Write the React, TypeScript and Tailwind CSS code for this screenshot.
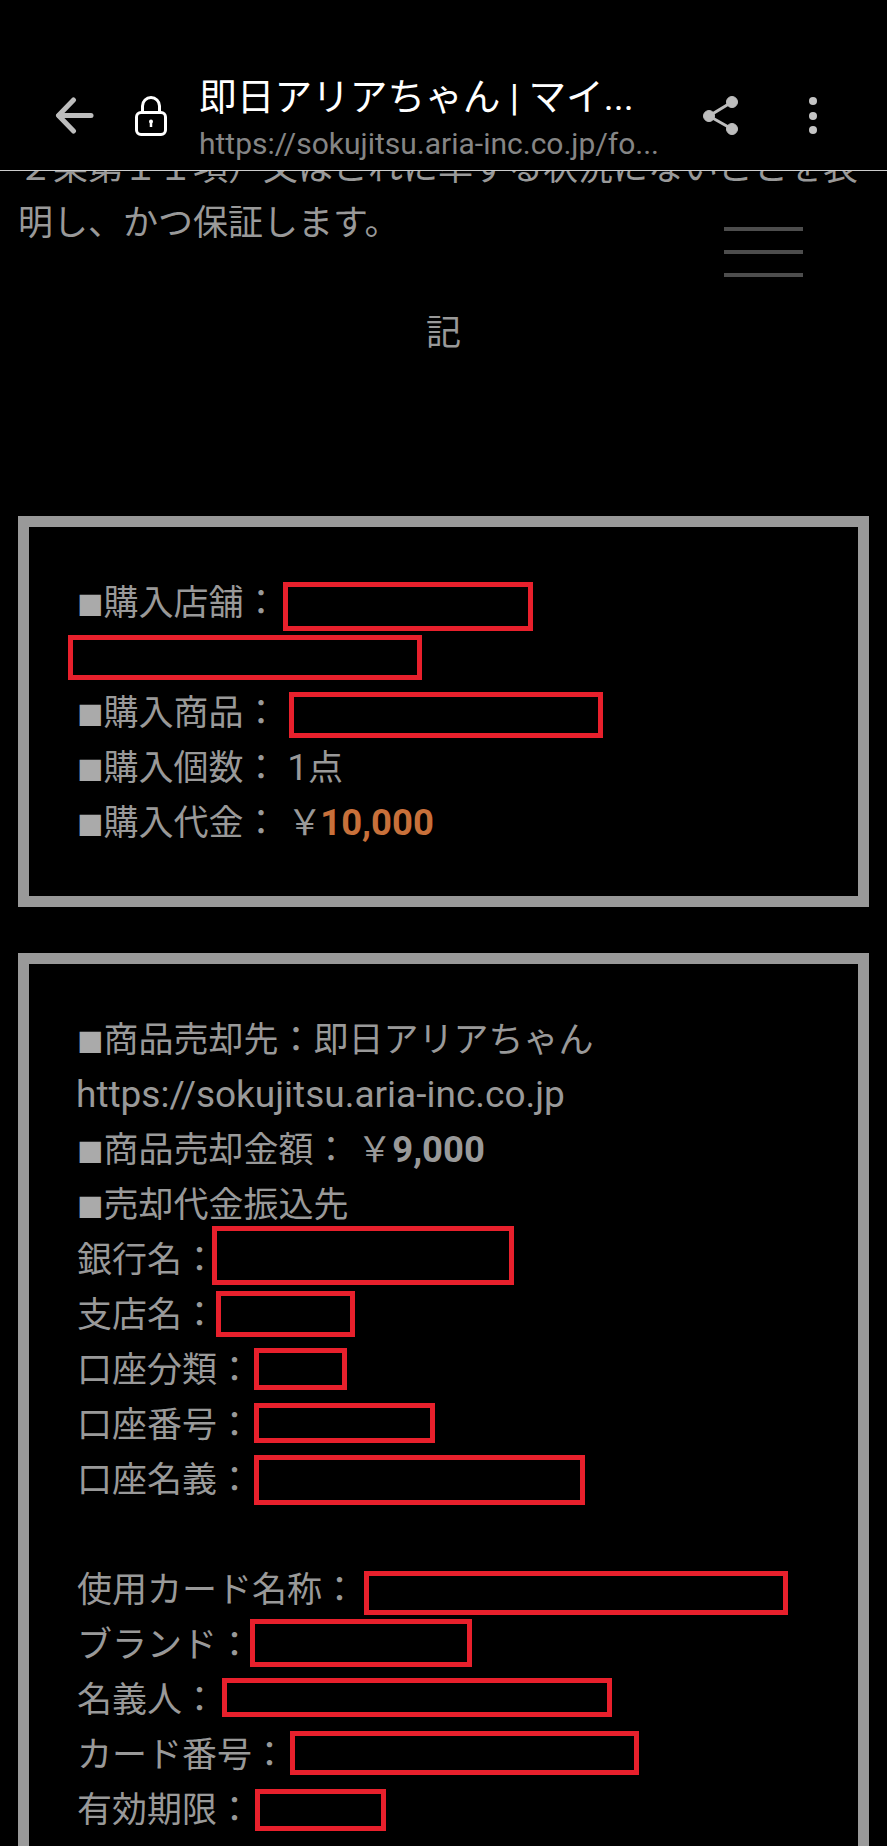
import type { ReactNode } from "react";

const rowFont = "[font-family:Roboto,'Noto_Sans_CJK_JP',sans-serif]";

function Row({ children, redact }: { children?: ReactNode; redact?: ReactNode }) {
  return (
    <div className="relative h-[55px] leading-[59px] whitespace-nowrap">
      {children}
      {redact}
    </div>
  );
}

function Sq() {
  return <span className="text-[26.5px] text-[#aaaaaa]">■</span>;
}

function Panel({ children, className }: { children: ReactNode; className: string }) {
  return (
    <section className={`border-[11px] border-[#999999] pl-[48px] ${className}`}>
      {children}
    </section>
  );
}

const redactBox = "absolute border-[5px] border-[#e8202c]";

export default function App() {
  return (
    <div className={`relative h-[1846px] overflow-hidden bg-black text-[35px] text-[#999999] ${rowFont}`}>
      <header className="absolute inset-x-0 top-0 z-10 flex h-[171px] items-start border-b border-[#cccccc] bg-black">
        <svg viewBox="0 0 39 37" className="ml-[55px] mt-[97px] h-[37px] w-[39px]" fill="none" stroke="#bdbdbd" strokeWidth="5" strokeLinecap="round" strokeLinejoin="round">
          <path d="M36 18.5H4" />
          <path d="M18.5 3 3.5 18.5 18.5 34" />
        </svg>
        <svg viewBox="0 0 32 40" className="ml-[41px] mt-[96px] h-[40px] w-[32px]" fill="none" stroke="#ffffff" strokeWidth="3">
          <rect x="1.5" y="16.5" width="29" height="22" rx="4.5" />
          <path d="M7.5 16.5V10a8.5 8.5 0 0 1 17 0v6.5" />
          <circle cx="16" cy="25.5" r="2" fill="#ffffff" stroke="none" />
          <path d="M16 26v5" strokeWidth="2.5" />
        </svg>
        <div className="ml-[32px] mt-[74px] w-[470px]">
          <div className="h-[46px] text-[37.7px] leading-[46px] text-white whitespace-nowrap">即日アリアちゃん | マイ...</div>
          <div className="mt-[5px] text-[30px] leading-[38px] text-[#858585] whitespace-nowrap">https://sokujitsu.aria-inc.co.jp/fo...</div>
        </div>
        <svg viewBox="0 0 36 39" className="ml-[34px] mt-[96px] h-[39px] w-[36px]" fill="#bdbdbd" stroke="#bdbdbd">
          <circle cx="6" cy="20" r="5.5" />
          <circle cx="29" cy="6" r="5.5" />
          <circle cx="29" cy="33" r="5.5" />
          <path d="M29 6 6 20l23 13" fill="none" strokeWidth="3" />
        </svg>
        <div className="ml-[70px] mt-[97px] flex flex-col gap-[6.5px]">
          <span className="h-[8px] w-[8px] rounded-full bg-[#c4c4c4]" />
          <span className="h-[8px] w-[8px] rounded-full bg-[#c4c4c4]" />
          <span className="h-[8px] w-[8px] rounded-full bg-[#c4c4c4]" />
        </div>
      </header>

      <div className="absolute left-[724px] top-[227px] flex w-[79px] flex-col gap-[19px]">
        <span className="h-[4px] bg-[#4d4d4d]" />
        <span className="h-[4px] bg-[#4d4d4d]" />
        <span className="h-[4px] bg-[#4d4d4d]" />
      </div>

      <main className="px-[18px] pt-[141px]">
        <p className="leading-[55px] whitespace-nowrap">２条第１１項）又はこれに準ずる状況にないことを表</p>
        <p className="leading-[55px] whitespace-nowrap">明し、かつ保証します。</p>
        <p className="mt-[55px] text-center leading-[55px]">記</p>

        <Panel className="mt-[155px] pt-[47px] pb-[47px]">
          <Row redact={<span className={`${redactBox} left-[206px] top-[8px] h-[49px] w-[250px]`} />}>
            <Sq />購入店舗：
          </Row>
          <Row redact={<span className={`${redactBox} left-[-9px] top-[6px] h-[45px] w-[354px]`} />} />
          <Row redact={<span className={`${redactBox} left-[212px] top-[8px] h-[46px] w-[314px]`} />}>
            <Sq />購入商品：
          </Row>
          <Row><Sq />購入個数： <span className="text-[37px] leading-none">1</span>点</Row>
          <Row>
            <Sq />購入代金： ￥<span className="ml-[-2px] text-[36.5px] leading-none font-bold text-[#c8703a]">10,000</span>
          </Row>
        </Panel>

        <Panel className="mt-[46px] h-[1000px] pt-[47px]">
          <Row><Sq />商品売却先：即日アリアちゃん</Row>
          <Row><span className="ml-[-1px] text-[37px] leading-none">https://sokujitsu.aria-inc.co.jp</span></Row>
          <Row><Sq />商品売却金額： ￥<span className="text-[36.5px] leading-none font-bold">9,000</span></Row>
          <Row><Sq />売却代金振込先</Row>
          <Row redact={<span className={`${redactBox} left-[135px] top-[-5px] h-[59px] w-[302px]`} />}>銀行名：</Row>
          <Row redact={<span className={`${redactBox} left-[139px] top-[5px] h-[46px] w-[139px]`} />}>支店名：</Row>
          <Row redact={<span className={`${redactBox} left-[177px] top-[7px] h-[42px] w-[93px]`} />}>口座分類：</Row>
          <Row redact={<span className={`${redactBox} left-[177px] top-[7px] h-[40px] w-[181px]`} />}>口座番号：</Row>
          <Row redact={<span className={`${redactBox} left-[177px] top-[4px] h-[50px] w-[331px]`} />}>口座名義：</Row>
          <Row />
          <Row redact={<span className={`${redactBox} left-[287px] top-[10px] h-[44px] w-[424px]`} />}>使用カード名称：</Row>
          <Row redact={<span className={`${redactBox} left-[173px] top-[3px] h-[48px] w-[222px]`} />}>ブランド：</Row>
          <Row redact={<span className={`${redactBox} left-[145px] top-[7px] h-[39px] w-[390px]`} />}>名義人：</Row>
          <Row redact={<span className={`${redactBox} left-[213px] top-[5px] h-[44px] w-[349px]`} />}>カード番号：</Row>
          <Row redact={<span className={`${redactBox} left-[178px] top-[8px] h-[42px] w-[131px]`} />}>有効期限：</Row>
        </Panel>
      </main>
    </div>
  );
}
